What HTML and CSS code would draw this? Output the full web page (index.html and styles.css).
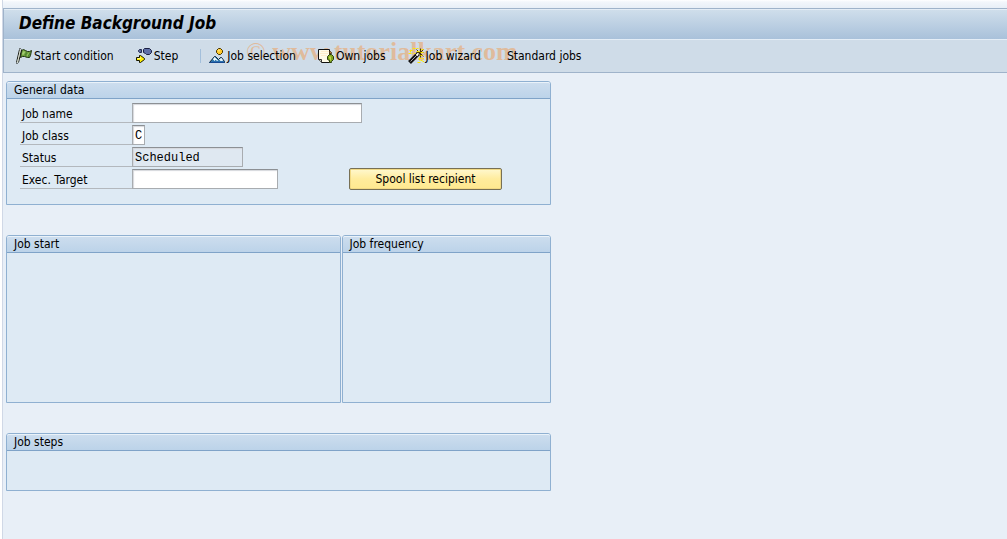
FILE: index.html
```html
<!DOCTYPE html>
<html lang="en">
<head>
<meta charset="utf-8">
<title>Define Background Job</title>
<link rel="stylesheet" href="styles.css">
</head>
<body>
<div class="window">
  <header class="header">
    <h1 class="title">Define Background Job</h1>
    <nav class="toolbar" aria-label="Application toolbar">
      <button class="tool" type="button">
        <svg class="icon" viewBox="-0.5 -0.5 16 16" aria-hidden="true">
          <path d="M5 2L7 1L9 2L11 3L13 3L15 2L14 7L13 9L11 9L8 8L6 8L4 9z" fill="#6ea03c" stroke="#203312"/>
          <path d="M7 3L6 6M8 3L7 6M12 5L11 7" fill="none" stroke="#b0d880"/>
          <path d="M10 4L9 7M13 5L12 8" fill="none" stroke="#40782a"/>
          <path d="M3 1L0 14M5 1L2 14M0 15H1M3 0H4" fill="none" stroke="#151710"/>
          <path d="M4 1L1 14" fill="none" stroke="#d7d9c5"/>
        </svg>
        <span>Start condition</span>
      </button>
      <button class="tool" type="button">
        <svg class="icon" viewBox="-0.5 -0.5 16 16" aria-hidden="true">
          <path d="M3 1H5V4H3L2 3V2z" fill="#59689f" stroke="#252b50"/>
          <path d="M7 1L8 0H13L15 2V4L13 6H10L9 5L7 4z" fill="#6070a8" stroke="#1b2042"/>
          <path d="M0 9H3V7H4L8 10V11L4 14H3V12H0z" fill="#fff000" stroke="#171700"/>
          <path d="M1 10H4V9" fill="none" stroke="#fff9a0"/>
        </svg>
        <span>Step</span>
      </button>
      <span class="separator" aria-hidden="true"></span>
      <button class="tool" type="button">
        <svg class="icon" viewBox="-0.5 -0.5 16 16" aria-hidden="true">
          <path d="M9 0H11L13 2V4L11 6H9L7 4V2z" fill="#ffc928" stroke="#473200"/>
          <path d="M9 2H10" stroke="#fff6b0" stroke-width="2"/>
          <path d="M0 14L5 8H6L9 11L11 9H12L15 13V14z" fill="#347eae" stroke="#102438"/>
          <path d="M4 11L5 9L8 12L6 11L5 12zM10 11L12 10L13 12L11 12z" fill="#fff" stroke="#e6f5fb"/>
          <path d="M2 13H14" stroke="#2a6fb0"/>
          <path d="M0 14H15" stroke="#174a91"/>
        </svg>
        <span>Job selection</span>
      </button>
      <button class="tool" type="button">
        <svg class="icon" viewBox="-0.5 -0.5 16 16" aria-hidden="true">
          <path d="M0 1H11V14H3L0 11z" fill="#fffbe9" stroke="#111"/>
          <path d="M3 3H10M2 5H9M3 7H8" stroke="#ffe0b0" stroke-dasharray="1 1"/>
          <path d="M0 11H3V14" fill="#c8c8bd" stroke="#333"/>
          <path d="M11 6H13L15 8V11L13 13V14H11V12L9 11V8z" fill="#80a51e" stroke="#2c3e0c"/>
          <path d="M11 3H12L13 4V5H11z" fill="#b38645" stroke="#4b351a"/>
          <path d="M11 8V10M12 8V12" stroke="#bdd54a"/>
        </svg>
        <span>Own jobs</span>
      </button>
      <button class="tool" type="button">
        <svg class="icon" viewBox="-0.5 -0.5 16 16" aria-hidden="true">
          <path d="M1 14L10 5" stroke="#151515" stroke-width="4"/>
          <path d="M2 13L8 7" stroke="#aaa"/>
          <path d="M8 7L10 5" stroke="#fff" stroke-width="2"/>
          <path d="M12 0V9M8 1L15 8M8 4H15M15 1L10 6" stroke="#4b3c00"/>
          <path d="M1 2H4M2 1V4M4 0H7M5 5H7M0 5H3M8 0H10M13 1H15M12 4H15M8 3H11M12 7H14M14 10H16M10 10H13M11 9V12M14 13H16M9 14H12M12 12H14" stroke="#ffe800"/>
        </svg>
        <span>Job wizard</span>
      </button>
      <button class="tool tool-text" type="button"><span>Standard jobs</span></button>
      <span class="watermark" aria-hidden="true"><span class="mark">©</span> www.tutorialkart.com</span>
    </nav>
  </header>

  <main class="content">
    <section class="group">
      <h2 class="group-title">General data</h2>
      <form class="general">
        <div class="fields">
          <div class="field"><label class="label" for="job-name">Job name</label><input class="input input-name" id="job-name" type="text"></div>
          <div class="field"><label class="label" for="job-class">Job class</label><input class="input input-class" id="job-class" type="text" value="C" maxlength="1"></div>
          <div class="field"><label class="label" for="status">Status</label><input class="input input-status" id="status" type="text" value="Scheduled" readonly></div>
          <div class="field"><label class="label" for="target">Exec. Target</label><input class="input input-target" id="target" type="text"></div>
        </div>
        <button class="spool" type="button">Spool list recipient</button>
      </form>
    </section>
    <div class="columns">
      <section class="group start">
        <h2 class="group-title">Job start</h2>
        <div class="schedule"></div>
      </section>
      <section class="group frequency">
        <h2 class="group-title">Job frequency</h2>
        <div class="schedule"></div>
      </section>
    </div>
    <section class="group">
      <h2 class="group-title">Job steps</h2>
      <div class="steps"></div>
    </section>
  </main>
</div>
</body>
</html>
```

FILE: styles.css
```css
* { box-sizing: border-box; }

body {
  margin: 0;
  background: #fff;
  color: #000;
  font: 12px/16px "DejaVu Sans Condensed", "DejaVu Sans", sans-serif;
  font-stretch: condensed;
}

.window {
  min-height: 100vh;
  margin-left: 2px;
  padding-top: 8px;
  border-left: 1px solid #d0d8e6;
  background: linear-gradient(#fff 0, #f2f6fb 2px, #e8eff7 8px, #e8eff7 100%);
}

.header {
  border: 1px solid #9fb3ca;
  border-right: 0;
  background: #cfdce8;
}

.title {
  margin: 0;
  padding: 3px 15px 5px;
  border-top: 1px solid #e4edf6;
  border-bottom: 1px solid #e4edf6;
  background: linear-gradient(#cfdeeb, #a9c1da);
  font-size: 17px;
  line-height: 21px;
  font-style: italic;
  font-weight: bold;
}

.toolbar {
  position: relative;
  display: flex;
  align-items: center;
  gap: 22px;
  height: 32px;
  padding-left: 12px;
}

.tool {
  z-index: 1;
  display: flex;
  align-items: center;
  gap: 2px;
  padding: 0;
  border: 0;
  background: none;
  color: #000;
  font: inherit;
  white-space: nowrap;
}

.tool-text { padding-left: 4px; }

.icon {
  width: 16px;
  height: 16px;
}

.separator {
  width: 1px;
  height: 14px;
  margin-right: -14px;
  background: #a3bfdb;
}

.watermark {
  position: absolute;
  left: 242px;
  top: -2px;
  color: rgba(240, 155, 80, 0.5);
  font: bold 26px/28px "Liberation Serif", serif;
  pointer-events: none;
  white-space: nowrap;
}

.mark { font-weight: normal; }

.content {
  display: flex;
  flex-direction: column;
  gap: 30px;
  max-width: 548px;
  padding: 8px 0 8px 3px;
}

.group {
  border: 1px solid #8fb0d1;
  border-radius: 3px 3px 0 0;
  background: #deeaf4;
}

.group-title {
  margin: 0;
  padding: 0 7px;
  border-top: 1px solid #eaf2f9;
  border-bottom: 1px solid #7fa3c8;
  border-radius: 2px 2px 0 0;
  background: linear-gradient(#ccddee, #bcd3e9);
  font-size: 12px;
  font-weight: normal;
  line-height: 15px;
}

.general {
  display: flex;
  align-items: flex-end;
  justify-content: space-between;
  padding: 4px 48px 14px 13px;
}

.fields {
  display: flex;
  flex: none;
  flex-direction: column;
  gap: 2px;
  width: 329px;
  padding-bottom: 1px;
}

.field {
  display: flex;
  height: 20px;
}

.label {
  flex: none;
  width: 112px;
  padding: 3px 2px 0;
  border-bottom: 1px solid #b3b8bd;
  line-height: 16px;
}

.input {
  flex: none;
  padding: 1px 2px 0;
  border: 1px solid #a8acb0;
  border-top-color: #8c9094;
  border-radius: 0;
  background: #fff;
  box-shadow: inset 1px 1px 1px #d5d8dc;
  color: #000;
  font: 12px/16px "Liberation Mono", monospace;
}

.input-name { width: 230px; }
.input-class { width: 13px; }
.input-status { width: 111px; background: #dfe8f1; }
.input-target { width: 146px; }

.spool {
  flex: none;
  width: 153px;
  height: 22px;
  padding: 0;
  border: 1px solid #777055;
  border-radius: 2px;
  background: linear-gradient(#fff8cf, #ffec9d 50%, #ffe98f);
  box-shadow: inset 0 0 0 1px #f2da84;
  color: #000;
  font: inherit;
}

.columns {
  display: flex;
  gap: 1px;
}

.start { flex: 335 1 0; }
.frequency { flex: 209 1 0; }
.schedule { min-height: 149px; }
.steps { min-height: 39px; }
```
